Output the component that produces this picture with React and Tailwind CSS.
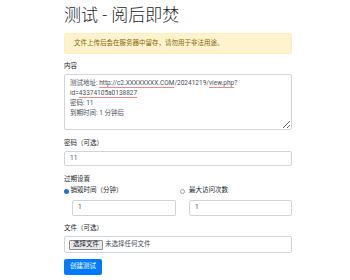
const font = "font-['Roboto','Noto_Sans_CJK_SC',sans-serif]";

function Radio({ checked }) {
  return checked ? (
    <span className="inline-block h-[5px] w-[5px] shrink-0 rounded-full bg-[#1a73e8]" />
  ) : (
    <span className="inline-block h-[5px] w-[5px] shrink-0 rounded-full border border-[#a0a0a0] bg-white" />
  );
}

function Squiggle({ children }) {
  return <span className="underline decoration-[#f08a8a] decoration-[1px] underline-offset-[1.5px]">{children}</span>;
}

export default function App() {
  return (
    <div className={`h-[280px] w-[350px] overflow-hidden bg-white ${font} text-[6.5px] text-[#212529]`}>
      <div className="ml-[64px] flex w-[228px] flex-col">
        <h1 className="mt-[5px] text-[17px] font-light leading-[20px] text-[#212529]">测试 - 阅后即焚</h1>

        <div className="mt-[8px] flex h-[21px] items-center rounded-[2px] border border-[#ffeeba] bg-[#fff3cd] pl-[9px] text-[#856404]">
          文件上传后会在服务器中留存，请勿用于非法用途。
        </div>

        <label className="mt-[7px] leading-[10px]">内容</label>
        <div className="mt-[3px] h-[56px] resize-y overflow-auto rounded-[2px] border border-[#ced4da] px-[5px] pt-[3px] leading-[10px] text-[#495057]">
          <div className="whitespace-nowrap">
            测试地址: <Squiggle>http://c2.XXXXXXXX.COM</Squiggle>/20241219/<Squiggle>view.php</Squiggle>?
          </div>
          <div className="whitespace-nowrap">
            id=<Squiggle>43374105a0138827</Squiggle>
          </div>
          <div>密码: 11</div>
          <div>到期时间: 1 分钟后</div>
        </div>

        <label className="mt-[8px] leading-[10px]">密码（可选）</label>
        <div className="mt-[3px] flex h-[15px] items-center rounded-[2px] border border-[#ced4da] px-[5px] text-[#495057]">11</div>

        <label className="mt-[8px] leading-[10px]">过期设置</label>
        <div className="mt-[2px] flex">
          <div className="flex w-[116px] flex-col">
            <div className="flex h-[10px] items-center">
              <Radio checked />
              <span className="ml-[1.5px]">销毁时间（分钟）</span>
            </div>
            <div className="ml-[8px] mt-[4px] flex h-[16px] w-[104px] items-center rounded-[2px] border border-[#ced4da] px-[5px] text-[#495057]">1</div>
          </div>
          <div className="flex flex-1 flex-col">
            <div className="flex h-[10px] items-center">
              <Radio />
              <span className="ml-[4px]">最大访问次数</span>
            </div>
            <div className="ml-[9px] mt-[4px] flex h-[16px] items-center rounded-[2px] border border-[#ced4da] px-[5px] text-[#495057]">1</div>
          </div>
        </div>

        <label className="mt-[7px] leading-[10px]">文件（可选）</label>
        <div className="mt-[3px] flex h-[17px] items-center rounded-[2px] border border-[#ced4da] pl-[4px] text-[#495057]">
          <span className="flex h-[10px] w-[34px] items-center justify-center rounded-[1px] border border-[#8f8f8f] bg-[#e9e9ed] text-[#212529]">选择文件</span>
          <span className="ml-[2px]">未选择任何文件</span>
        </div>

        <button className="mt-[6px] flex h-[16px] w-[38px] items-center justify-center rounded-[2px] bg-[#007bff] text-white">创建测试</button>
      </div>
    </div>
  );
}
